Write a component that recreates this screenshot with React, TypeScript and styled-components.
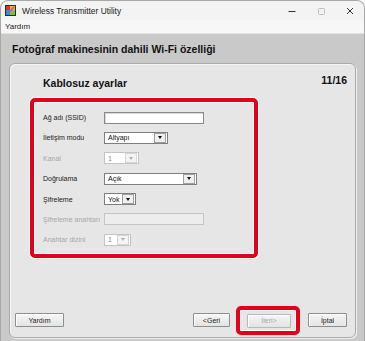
import React from 'react';
import styled, { createGlobalStyle } from 'styled-components';

const GlobalStyle = createGlobalStyle`
  html, body {
    margin: 0;
    padding: 0;
    background: #ffffff;
  }
  body {
    font-family: "Liberation Sans", Arial, sans-serif;
  }
`;

const Window = styled.div`
  width: 365px;
  height: 341px;
  box-sizing: border-box;
  display: flex;
  flex-direction: column;
  border: 1px solid #a8a8a8;
  border-bottom: none;
  border-radius: 8px 8px 0 0;
  overflow: hidden;
  background: #c9c9c9;
`;

const TitleBar = styled.div`
  height: 19px;
  display: flex;
  align-items: center;
  background: #f3f3f3;
  padding-left: 4px;
`;

const AppIcon = styled.svg`
  width: 11px;
  height: 11px;
  margin-right: 6px;
`;

const TitleText = styled.span`
  flex: 1;
  font-size: 8.4px;
  color: #1a1a1a;
`;

const WinButton = styled.div`
  width: 29px;
  height: 19px;
  display: flex;
  align-items: center;
  justify-content: center;
`;

const MenuBar = styled.div`
  height: 13px;
  display: flex;
  align-items: center;
  padding-left: 4px;
  background: #f7f7f7;
  border-bottom: 1px solid #e2e2e2;
  font-size: 8px;
  color: #1a1a1a;
`;

const Body = styled.div`
  flex: 1;
  display: flex;
  flex-direction: column;
  padding: 0 8px 3px 8px;
`;

const Heading = styled.div`
  height: 29px;
  display: flex;
  align-items: center;
  padding-left: 3px;
  font-size: 10.5px;
  font-weight: bold;
  color: #111;
`;

const Panel = styled.div`
  flex: 1;
  display: flex;
  flex-direction: column;
  background: #e6e6e6;
  border: 1px solid #a9a9a9;
  border-radius: 6px;
  box-shadow: inset 1px 1px 0 #f6f6f6, 1px 1px 0 #f0f0f0;
  padding: 9px 8px 2px 5px;
`;

const PanelHeader = styled.div`
  display: flex;
  justify-content: space-between;
  align-items: flex-start;
  height: 25px;
`;

const SectionTitle = styled.div`
  margin: 4px 0 0 28px;
  font-size: 10.5px;
  font-weight: bold;
  color: #111;
`;

const Counter = styled.div`
  margin-top: 1px;
  font-size: 10.5px;
  font-weight: bold;
  color: #111;
`;

const RedFrame = styled.div`
  margin-left: 15px;
  width: 228px;
  box-sizing: border-box;
  border: 4px solid #e2001a;
  border-radius: 5px;
  box-shadow: inset 0 0 0 1px #ffffff, 0 0 0 1px #ffffff;
  padding: 9px 0 8px 9px;
  display: grid;
  grid-template-columns: 61px auto;
  grid-auto-rows: 13px;
  row-gap: 7.4px;
  align-items: center;
  justify-items: start;
`;

const Label = styled.span<{ $disabled?: boolean }>`
  font-size: 7px;
  color: ${p => (p.$disabled ? '#a6a6a6' : '#222')};
  white-space: nowrap;
`;

const TextBox = styled.div<{ $disabled?: boolean }>`
  width: 100px;
  height: 12px;
  box-sizing: border-box;
  background: ${p => (p.$disabled ? '#ededed' : '#ffffff')};
  border: 1px solid ${p => (p.$disabled ? '#c4c4c4' : '#8a8a8a')};
  box-shadow: ${p => (p.$disabled ? 'none' : 'inset 1px 1px 0 #d8d8d8')};
`;

const Select = styled.div<{ $width: number; $disabled?: boolean }>`
  width: ${p => p.$width}px;
  height: 12px;
  box-sizing: border-box;
  display: flex;
  align-items: center;
  background: #ffffff;
  border: 1px solid ${p => (p.$disabled ? '#c4c4c4' : '#7f7f7f')};
  font-size: 7px;
  color: ${p => (p.$disabled ? '#8c8c8c' : '#111')};
`;

const SelectValue = styled.span`
  flex: 1;
  padding-left: 3px;
`;

const DropButton = styled.div<{ $disabled?: boolean }>`
  width: 10px;
  height: 8px;
  margin-right: 1px;
  display: flex;
  align-items: center;
  justify-content: center;
  background: ${p => (p.$disabled ? '#f4f4f4' : '#f0f0f0')};
  border: 1px solid ${p => (p.$disabled ? '#d6d6d6' : '#a0a0a0')};
`;

const Arrow = styled.div<{ $disabled?: boolean }>`
  width: 0;
  height: 0;
  border-left: 2.5px solid transparent;
  border-right: 2.5px solid transparent;
  border-top: 3px solid ${p => (p.$disabled ? '#b0b0b0' : '#111')};
`;

const Spacer = styled.div`
  flex: 1;
`;

const Footer = styled.div`
  display: flex;
  align-items: center;
  height: 30px;
`;

const Button = styled.div<{ $width: number; $disabled?: boolean }>`
  width: ${p => p.$width}px;
  height: 14px;
  box-sizing: border-box;
  display: flex;
  align-items: center;
  justify-content: center;
  background: linear-gradient(#f6f6f6, #e4e4e4);
  border: 1px solid ${p => (p.$disabled ? '#b9b9b9' : '#8e8e8e')};
  border-radius: 1px;
  box-shadow: inset 1px 1px 0 #ffffff;
  font-size: 7px;
  color: ${p => (p.$disabled ? '#a8a8a8' : '#222')};
`;

const HighlightFrame = styled.div`
  margin: 0 8px 0 6px;
  padding: 4px 5px 3px 7px;
  border: 4px solid #e2001a;
  border-radius: 5px;
  box-shadow: inset 0 0 0 1px #ffffff;
  background: #e6e6e6;
`;

const ButtonGap = styled.div`
  flex: 1;
`;

interface FieldProps {
  label: string;
  disabled?: boolean;
  children: React.ReactNode;
}

const Field: React.FC<FieldProps> = ({ label, disabled, children }) => (
  <>
    <Label $disabled={disabled}>{label}</Label>
    {children}
  </>
);

const Dropdown: React.FC<{ width: number; value: string; disabled?: boolean }> = ({
  width,
  value,
  disabled,
}) => (
  <Select $width={width} $disabled={disabled}>
    <SelectValue>{value}</SelectValue>
    <DropButton $disabled={disabled}>
      <Arrow $disabled={disabled} />
    </DropButton>
  </Select>
);

export default function App() {
  return (
    <>
      <GlobalStyle />
      <Window>
        <TitleBar>
          <AppIcon viewBox="0 0 11 11">
            <rect width="11" height="11" fill="#2a2a2a" />
            <rect x="1" y="1" width="4" height="4" fill="#e8312f" />
            <rect x="5" y="1" width="5" height="4" fill="#f2b51c" />
            <rect x="1" y="5" width="4" height="5" fill="#2f8fd8" />
            <rect x="5" y="5" width="5" height="5" fill="#7bc043" />
            <path d="M2 9 L9 2" stroke="#c04bd6" strokeWidth="1.6" />
          </AppIcon>
          <TitleText>Wireless Transmitter Utility</TitleText>
          <WinButton>
            <svg width="10" height="10" viewBox="0 0 10 10">
              <path d="M1.5 5.5 H8.5" stroke="#333" strokeWidth="1" />
            </svg>
          </WinButton>
          <WinButton>
            <svg width="10" height="10" viewBox="0 0 10 10">
              <rect x="2.5" y="2.5" width="6" height="6" rx="1" fill="none" stroke="#bdbdbd" strokeWidth="1" />
            </svg>
          </WinButton>
          <WinButton>
            <svg width="10" height="10" viewBox="0 0 10 10">
              <path d="M2 2 L8 8 M8 2 L2 8" stroke="#333" strokeWidth="1" />
            </svg>
          </WinButton>
        </TitleBar>
        <MenuBar>Yardım</MenuBar>
        <Body>
          <Heading>Fotoğraf makinesinin dahili Wi-Fi özelliği</Heading>
          <Panel>
            <PanelHeader>
              <SectionTitle>Kablosuz ayarlar</SectionTitle>
              <Counter>11/16</Counter>
            </PanelHeader>
            <RedFrame>
              <Field label="Ağ adı (SSID)">
                <TextBox />
              </Field>
              <Field label="İletişim modu">
                <Dropdown width={64} value="Altyapı" />
              </Field>
              <Field label="Kanal" disabled>
                <Dropdown width={35} value="1" disabled />
              </Field>
              <Field label="Doğrulama">
                <Dropdown width={93} value="Açık" />
              </Field>
              <Field label="Şifreleme">
                <Dropdown width={32} value="Yok" />
              </Field>
              <Field label="Şifreleme anahtarı" disabled>
                <TextBox $disabled />
              </Field>
              <Field label="Anahtar dizini" disabled>
                <Dropdown width={27} value="1" disabled />
              </Field>
            </RedFrame>
            <Spacer />
            <Footer>
              <Button $width={49}>Yardım</Button>
              <ButtonGap />
              <Button $width={37}>&lt;Geri</Button>
              <HighlightFrame>
                <Button $width={44} $disabled>
                  İleri&gt;
                </Button>
              </HighlightFrame>
              <Button $width={39}>İptal</Button>
            </Footer>
          </Panel>
        </Body>
      </Window>
    </>
  );
}
